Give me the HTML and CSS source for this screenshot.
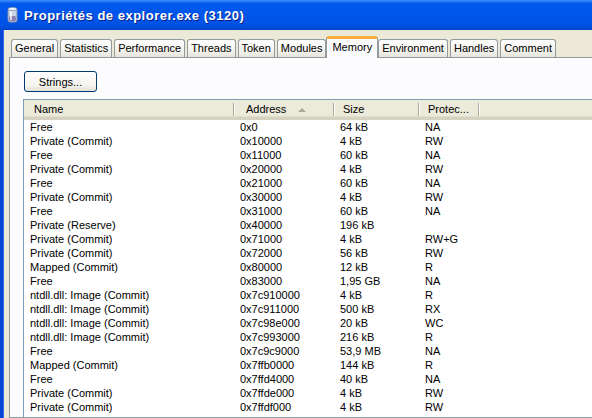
FILE: index.html
```html
<!DOCTYPE html>
<html lang="fr">
<head>
  <meta charset="UTF-8" />
  <title>Propriétés de explorer.exe (3120)</title>
  <link rel="stylesheet" href="styles.css">
</head>
<body>
  <div class="fenetre">
    <div class="titre">
      <svg class="icone" width="14" height="18" viewBox="0 0 14 18">
        <rect x="2" y="2" width="9" height="14" rx="2" fill="#c7d6ea" stroke="#7a8fb0" stroke-width="1"/>
        <ellipse cx="6.5" cy="3" rx="4.5" ry="1.6" fill="#eef4fb" stroke="#7a8fb0" stroke-width="0.8"/>
        <rect x="3" y="10" width="7" height="5" rx="1.5" fill="#8c7fb0"/>
        <rect x="4" y="5" width="2" height="9" fill="#ffffff" opacity="0.7"/>
      </svg>
      <span class="titre-texte">Propriétés de explorer.exe (3120)</span>
    </div>

    <div class="corps">
      <div class="onglets">
        <div class="onglet">General</div>
        <div class="onglet">Statistics</div>
        <div class="onglet">Performance</div>
        <div class="onglet">Threads</div>
        <div class="onglet">Token</div>
        <div class="onglet">Modules</div>
        <div class="onglet actif">Memory</div>
        <div class="onglet">Environment</div>
        <div class="onglet">Handles</div>
        <div class="onglet">Comment</div>
      </div>

      <div class="panneau">
        <button class="bouton">Strings...</button>

        <div class="liste">
          <div class="entete">
            <div class="col">Name</div>
            <div class="col adresse">Address <span class="tri"></span></div>
            <div class="col">Size</div>
            <div class="col">Protec...</div>
            <div class="col"></div>
          </div>
          <div class="lignes">
            <div class="ligne"><span>Free</span><span>0x0</span><span>64 kB</span><span>NA</span></div>
            <div class="ligne"><span>Private (Commit)</span><span>0x10000</span><span>4 kB</span><span>RW</span></div>
            <div class="ligne"><span>Free</span><span>0x11000</span><span>60 kB</span><span>NA</span></div>
            <div class="ligne"><span>Private (Commit)</span><span>0x20000</span><span>4 kB</span><span>RW</span></div>
            <div class="ligne"><span>Free</span><span>0x21000</span><span>60 kB</span><span>NA</span></div>
            <div class="ligne"><span>Private (Commit)</span><span>0x30000</span><span>4 kB</span><span>RW</span></div>
            <div class="ligne"><span>Free</span><span>0x31000</span><span>60 kB</span><span>NA</span></div>
            <div class="ligne"><span>Private (Reserve)</span><span>0x40000</span><span>196 kB</span><span></span></div>
            <div class="ligne"><span>Private (Commit)</span><span>0x71000</span><span>4 kB</span><span>RW+G</span></div>
            <div class="ligne"><span>Private (Commit)</span><span>0x72000</span><span>56 kB</span><span>RW</span></div>
            <div class="ligne"><span>Mapped (Commit)</span><span>0x80000</span><span>12 kB</span><span>R</span></div>
            <div class="ligne"><span>Free</span><span>0x83000</span><span>1,95 GB</span><span>NA</span></div>
            <div class="ligne"><span>ntdll.dll: Image (Commit)</span><span>0x7c910000</span><span>4 kB</span><span>R</span></div>
            <div class="ligne"><span>ntdll.dll: Image (Commit)</span><span>0x7c911000</span><span>500 kB</span><span>RX</span></div>
            <div class="ligne"><span>ntdll.dll: Image (Commit)</span><span>0x7c98e000</span><span>20 kB</span><span>WC</span></div>
            <div class="ligne"><span>ntdll.dll: Image (Commit)</span><span>0x7c993000</span><span>216 kB</span><span>R</span></div>
            <div class="ligne"><span>Free</span><span>0x7c9c9000</span><span>53,9 MB</span><span>NA</span></div>
            <div class="ligne"><span>Mapped (Commit)</span><span>0x7ffb0000</span><span>144 kB</span><span>R</span></div>
            <div class="ligne"><span>Free</span><span>0x7ffd4000</span><span>40 kB</span><span>NA</span></div>
            <div class="ligne"><span>Private (Commit)</span><span>0x7ffde000</span><span>4 kB</span><span>RW</span></div>
            <div class="ligne"><span>Private (Commit)</span><span>0x7ffdf000</span><span>4 kB</span><span>RW</span></div>
          </div>
        </div>
      </div>
    </div>
  </div>
</body>
</html>
```

FILE: styles.css
```css
html, body {
  margin: 0;
  padding: 0;
  width: 592px;
  height: 418px;
  overflow: hidden;
  background-color: #ece9d8;
}

body {
  font-family: "Liberation Sans", Arial, sans-serif;
  font-size: 11px;
  color: #000;
}

.fenetre {
  width: 640px;
  height: 418px;
  display: flex;
  flex-direction: column;
}

/* barre de titre style XP */
.titre {
  height: 30px;
  flex-shrink: 0;
  display: flex;
  align-items: center;
  padding-left: 6px;
  background: linear-gradient(to bottom, #3d95ff 0px, #1c6cf0 2px, #0058ee 4px, #0056ea 50%, #0052e2 85%, #0046cc 100%);
}

.icone {
  margin-right: 4px;
  margin-top: -1px;
}

.titre-texte {
  color: #fff;
  font-weight: bold;
  font-size: 13px;
  letter-spacing: 0.5px;
  text-shadow: 1px 1px 0 #0a1e8a;
}

.corps {
  flex: 1;
  min-height: 0;
  display: flex;
  flex-direction: column;
  border-left: 3px solid #0846d8;
  padding: 6px 0 0 6px;
  box-shadow: inset 1px 0 0 #2e6fe6;
}

.onglets {
  display: flex;
  align-items: flex-end;
  gap: 2px;
  padding-left: 2px;
  height: 21px;
  position: relative;
  z-index: 1;
}

.onglet {
  height: 17px;
  line-height: 17px;
  padding: 0 3px;
  border: 1px solid #919b9c;
  border-bottom: none;
  border-radius: 3px 3px 0 0;
  background: linear-gradient(to bottom, #fefefe, #f4f3ee 60%, #e5e4dc);
  white-space: nowrap;
}

.onglet.actif {
  margin: 0 -2px -1px;
  padding: 0 5px;
  height: 19px;
  line-height: 16px;
  background: #fcfcfe;
  border-top: 3px solid #f5ae3b;
}

.panneau {
  flex: 1;
  min-height: 0;
  overflow: hidden;
  background-color: #fcfcfe;
  border: 1px solid #919b9c;
  padding: 13px 0 0 14px;
  display: flex;
  flex-direction: column;
  align-items: flex-start;
}

.bouton {
  width: 73px;
  height: 21px;
  font-family: "Liberation Sans", Arial, sans-serif;
  font-size: 11px;
  color: #000;
  border: 1px solid #003c74;
  border-radius: 3px;
  background: linear-gradient(to bottom, #ffffff, #f4f3ee 70%, #e3e1d6);
  padding: 0;
  margin-bottom: 7px;
}

.liste {
  margin-left: -1px;
  flex: 1;
  align-self: stretch;
  border: 1px solid #7f9db9;
  border-right: none;
  border-bottom: none;
  background-color: #fff;
}

.entete,
.ligne {
  display: grid;
  grid-template-columns: 209px 100px 85px 60px 1fr;
}

.entete {
  height: 17px;
  background-color: #ebeadb;
  border-bottom: 3px solid #d6d2c2;
  box-shadow: inset 0 -1px 0 #e2decd;
}

.entete .col {
  position: relative;
  padding-left: 10px;
  line-height: 18px;
  white-space: nowrap;
}

.entete .adresse {
  padding-left: 13px;
}

.entete .col + .col::before {
  content: "";
  position: absolute;
  left: 0;
  top: 3px;
  bottom: 2px;
  width: 1px;
  background-color: #aca899;
  box-shadow: 1px 0 0 #fff;
}

.tri {
  display: inline-block;
  margin-left: 9px;
  width: 0;
  height: 0;
  border-left: 4px solid transparent;
  border-right: 4px solid transparent;
  border-bottom: 4px solid #aca899;
  vertical-align: 1px;
}

.ligne {
  height: 14px;
  line-height: 14px;
}

.ligne span {
  padding-left: 7px;
  white-space: nowrap;
}

.ligne span:first-child {
  padding-left: 6px;
}
```
